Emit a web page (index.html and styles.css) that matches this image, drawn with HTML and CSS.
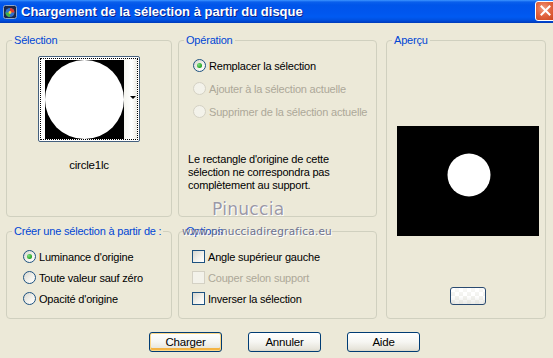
FILE: index.html
```html
<!DOCTYPE html>
<html lang="fr">
<head>
<meta charset="utf-8">
<title>Chargement de la sélection à partir du disque</title>
<link rel="stylesheet" href="styles.css">
</head>
<body>
<div class="window">
  <div class="titlebar">
    <svg class="appicon" width="14" height="14" viewBox="0 0 14 14">
      <rect x="0.5" y="0.5" width="13" height="13" rx="2" fill="#1b2747" stroke="#8fa6c8"/>
      <circle cx="7" cy="7.5" r="4.5" fill="#2f6fd0"/>
      <path d="M7 3 A4.5 4.5 0 0 1 11.5 7.5 L7 7.5 Z" fill="#e23b2e"/>
      <path d="M2.5 7.5 A4.5 4.5 0 0 0 7 12 L7 7.5 Z" fill="#3fb34a"/>
      <circle cx="7" cy="7.5" r="1.4" fill="#f4d23c"/>
    </svg>
    <span class="title">Chargement de la sélection à partir du disque</span>
    <div class="close">
      <svg width="11" height="11" viewBox="0 0 11 11"><path d="M1.5 1.5 L9.5 9.5 M9.5 1.5 L1.5 9.5" stroke="#fff" stroke-width="2" stroke-linecap="square"/></svg>
    </div>
  </div>

  <div class="body">
    <div class="groups">
      <fieldset class="grp g-sel">
        <legend>Sélection</legend>
        <div class="sel-inner">
          <div class="thumb">
            <div class="focus">
              <svg class="thumb-img" width="79" height="79" viewBox="0 0 79 79">
                <rect width="79" height="79" fill="#000"/>
                <circle cx="39.5" cy="39.5" r="39.5" fill="#fff"/>
              </svg>
              <div class="strip"><span class="arrow"></span></div>
            </div>
          </div>
          <div class="thumb-name">circle1lc</div>
        </div>
      </fieldset>

      <fieldset class="grp g-op">
        <legend>Opération</legend>
        <div class="op-inner">
          <div class="row"><span class="radio on"></span><span>Remplacer la sélection</span></div>
          <div class="row disabled"><span class="radio"></span><span>Ajouter à la sélection actuelle</span></div>
          <div class="row disabled"><span class="radio"></span><span>Supprimer de la sélection actuelle</span></div>
          <p class="note">Le rectangle d'origine de cette sélection ne correspondra pas complètement au support.</p>
        </div>
      </fieldset>

      <fieldset class="grp g-prev">
        <legend>Aperçu</legend>
        <div class="prev-inner">
          <svg class="preview" width="142" height="110" viewBox="0 0 142 110">
            <rect width="142" height="110" fill="#000"/>
            <circle cx="72" cy="49" r="21.5" fill="#fff"/>
          </svg>
          <div class="mini-btn"></div>
        </div>
      </fieldset>

      <fieldset class="grp g-create">
        <legend>Créer une sélection à partir de :</legend>
        <div class="create-inner">
          <div class="row r21"><span class="radio on"></span><span>Luminance d'origine</span></div>
          <div class="row r21"><span class="radio"></span><span>Toute valeur sauf zéro</span></div>
          <div class="row r21"><span class="radio"></span><span>Opacité d'origine</span></div>
        </div>
      </fieldset>

      <fieldset class="grp g-opts">
        <legend>Options</legend>
        <div class="opts-inner">
          <div class="row r21"><span class="check"></span><span>Angle supérieur gauche</span></div>
          <div class="row r21 disabled"><span class="check"></span><span>Couper selon support</span></div>
          <div class="row r21"><span class="check"></span><span>Inverser la sélection</span></div>
        </div>
      </fieldset>
    </div>

    <div class="buttons">
      <div class="btn default">Charger</div>
      <div class="btn">Annuler</div>
      <div class="btn">Aide</div>
    </div>
  </div>

  <div class="wm-name">Pinuccia</div>
  <div class="wm-url">www.pinucciadiregrafica.eu</div>
</div>
</body>
</html>
```

FILE: styles.css
```css
* { box-sizing: border-box; }
html, body { margin: 0; padding: 0; background: #ECE9D8; }
body { font-family: "Liberation Sans", Arial, sans-serif; font-size: 11px; color: #000; letter-spacing: -0.2px; }

.window {
  position: relative;
  width: 553px;
  height: 358px;
  overflow: hidden;
  background: #ECE9D8;
}

/* Title bar */
.titlebar {
  height: 23px;
  display: flex;
  align-items: center;
  padding-left: 3px;
  background: linear-gradient(to bottom, #3d95ff 0px, #0a5fec 2px, #0055ea 5px, #0056ee 12px, #005af2 17px, #0050e0 20px, #0040c8 22px, #003bb5 23px);
}
.appicon { flex: none; margin-top: 1px; }
.title {
  flex: 1;
  margin-left: 4px;
  color: #fff;
  font-family: "Liberation Sans", Arial, sans-serif;
  font-weight: bold;
  font-size: 13px;
  letter-spacing: 0;
  text-shadow: 1px 1px 0 #0a1e8a;
  white-space: nowrap;
}
.close {
  flex: none;
  width: 21px;
  height: 20px;
  margin-right: -3px;
  margin-top: -2px;
  border: 1px solid #fff;
  border-radius: 3px;
  background: radial-gradient(circle at 40% 35%, #f19a7e 0%, #e2643f 45%, #c8421a 100%);
  display: flex;
  align-items: center;
  justify-content: center;
}

/* Body */
.body { padding: 10px 0 0 6px; }

.groups {
  display: grid;
  grid-template-columns: 166px 199px 163px;
  grid-template-rows: 184px 95px;
  column-gap: 6px;
  row-gap: 7px;
}
.g-prev { grid-column: 3; grid-row: 1 / span 2; margin-left: 3px !important; }
.g-create { grid-column: 1; grid-row: 2; }
.g-opts { grid-column: 2; grid-row: 2; }

.grp {
  margin: 0;
  padding: 0;
  min-width: 0;
  border: 1px solid #D0D0BF;
  border-radius: 4px;
}
.grp legend {
  margin-left: 5px;
  padding: 0 2px;
  line-height: 14px;
  color: #0046D5;
}

/* Sélection */
.sel-inner {
  padding-top: 9px;
  display: flex;
  flex-direction: column;
  align-items: center;
}
.thumb {
  width: 102px;
  height: 86px;
  border: 1px solid #44607e;
  border-radius: 2px;
  padding: 1px;
  display: flex;
  background: #fff;
}
.focus {
  flex: 1;
  border: 1px dotted #000;
  display: flex;
  align-items: center;
  padding-left: 4px;
}
.thumb-img { display: block; flex: none; }
.strip {
  flex: 1;
  align-self: stretch;
  background: linear-gradient(to right, #f4f4ee, #ffffff 60%, #ecebe4);
  display: flex;
  align-items: center;
  justify-content: flex-end;
  padding-right: 1px;
  padding-bottom: 3px;
}
.arrow {
  width: 0; height: 0;
  border-left: 3px solid transparent;
  border-right: 3px solid transparent;
  border-top: 3px solid #000;
}
.thumb-name {
  margin-top: 17px;
  line-height: 13px;
  font-size: 11.5px;
}

/* Rows */
.row {
  display: flex;
  align-items: center;
  height: 23px;
  white-space: nowrap;
}
.row.r21 { height: 21px; }
.row .radio, .row .check { margin-right: 3px; flex: none; }
.row.disabled { color: #ACA899; }

.radio {
  width: 13px;
  height: 13px;
  border-radius: 50%;
  border: 1px solid #1C5180;
  background: linear-gradient(135deg, #d8d7cf 0%, #f4f3ee 60%, #ffffff 100%);
  display: flex;
  align-items: center;
  justify-content: center;
}
.radio.on::after {
  content: "";
  width: 5px;
  height: 5px;
  border-radius: 50%;
  background: radial-gradient(circle at 35% 35%, #7ee07e, #21a121 70%);
}
.disabled .radio, .disabled .check {
  border-color: #D4D1C4;
  background: #F3F2EA;
}
.check {
  width: 13px;
  height: 13px;
  border: 1px solid #1C5180;
  background: linear-gradient(135deg, #d8d7cf 0%, #f4f3ee 60%, #ffffff 100%);
}

/* Opération */
.op-inner { padding: 7px 0 0 14px; }
.note {
  margin: 30px 0 0 -5px;
  line-height: 13px;
  width: 170px;
}

/* Aperçu */
.prev-inner {
  display: flex;
  flex-direction: column;
  align-items: center;
  padding-top: 79px;
  padding-left: 3px;
}
.preview { display: block; }
.mini-btn {
  margin-top: 51px;
  width: 36px;
  height: 18px;
  border: 1px solid #2a4a70;
  border-radius: 3px;
  background:
    linear-gradient(to bottom, rgba(255,255,255,0.55), rgba(255,255,255,0) 50%, rgba(220,220,214,0.6)),
    repeating-conic-gradient(#f2f2ee 0 25%, #ffffff 0 50%) 0 0 / 8px 8px;
}

/* Créer */
.create-inner { padding: 8px 0 0 16px; }

/* Options */
.opts-inner { padding: 8px 0 0 13px; }

/* Buttons */
.buttons {
  display: flex;
  gap: 26px;
  padding-left: 143px;
  margin-top: 13px;
}
.btn {
  width: 73px;
  height: 20px;
  border: 1px solid #003C74;
  border-radius: 3px;
  background: linear-gradient(to bottom, #ffffff 0%, #f6f6f2 50%, #e6e4da 90%, #d8d5c8 100%);
  display: flex;
  align-items: center;
  justify-content: center;
  font-size: 11.5px;
}
.btn.default {
  box-shadow: inset 0 0 0 1px #fbd78a, inset 0 -2px 0 1px #f4b444;
}

/* Watermark overlay */
.wm-name {
  position: absolute;
  left: 212px;
  top: 199px;
  font-family: "DejaVu Sans", Verdana, sans-serif;
  font-size: 17px;
  letter-spacing: 0.3px;
  color: #9a98a6;
  text-shadow: 0 0 1px #fff, 1px 1px 0 #fff;
}
.wm-url {
  position: absolute;
  left: 182px;
  top: 225px;
  font-family: "DejaVu Sans", Verdana, sans-serif;
  font-size: 10.5px;
  letter-spacing: 0.2px;
  color: #6c7290;
  text-shadow: 1px 1px 0 #fff;
}
```
